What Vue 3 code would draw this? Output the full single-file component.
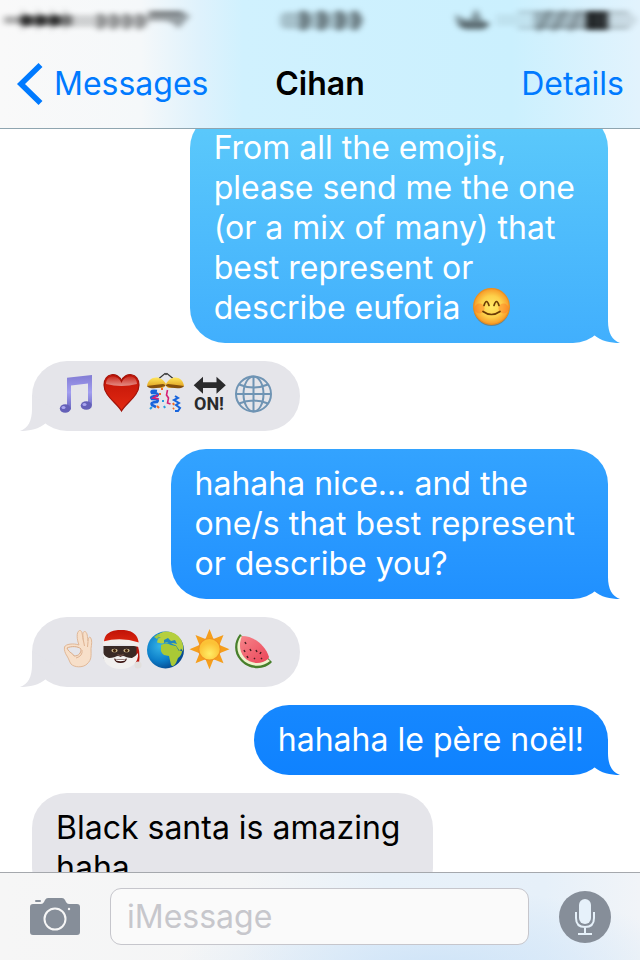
<template>
  <div class="phone">
    <header class="top">
      <svg class="status" viewBox="0 0 640 40" preserveAspectRatio="none" aria-hidden="true">
        <defs>
          <filter id="smear" x="-20%" y="-80%" width="140%" height="260%">
            <feGaussianBlur stdDeviation="3 2.6" />
          </filter>
        </defs>
        <g filter="url(#smear)">
          <rect x="4" y="16" width="18" height="8" opacity="0.3" />
          <rect x="20" y="15" width="52" height="11" opacity="0.45" />
          <circle v-for="x in [27, 41, 55]" :key="x" :cx="x" cy="20.500" r="6" opacity="0.6" />
          <path d="M22 8l8 12-8 12zM37 8l8 12-8 12zM51 8l8 12-8 12zM64 8l8 12-8 12z" opacity="0.22" />
          <rect x="70" y="15" width="78" height="12" opacity="0.16" />
          <path d="M97 13h6l5 8-5 9h-6zM110 13h6l5 8-5 9h-6zM123 13h6l5 8-5 9h-6zM136 13h6l5 8-5 9h-6z" opacity="0.3" />
          <path d="M148 11h34l8 5-12 13-4-5-8-3h-18z" opacity="0.35" />
          <path d="M150 13h32" stroke="#000" stroke-width="3" opacity="0.35" />
          <rect x="280" y="12" width="82" height="17" rx="6" opacity="0.2" />
          <path d="M300 10h6l5 10-5 11h-6zM318 10h6l5 10-5 11h-6zM336 10h6l5 10-5 11h-6zM352 10h5l6 10-6 11h-5z" opacity="0.35" />
          <path d="M456 13q2 5 14 7l6-12 6 12 8 3-6 7h-18q-12-3-10-17z" opacity="0.4" />
          <path d="M460 25h28" stroke="#000" stroke-width="4" opacity="0.35" />
          <rect x="496" y="14" width="40" height="12" opacity="0.06" />
          <rect x="534" y="12" width="60" height="17" opacity="0.25" />
          <path d="M518 12h110M518 28h110" stroke="#000" stroke-width="2" opacity="0.25" />
          <path d="M538 32l12-22M553 32l12-22M570 32l10-22" stroke="#000" stroke-width="3" opacity="0.3" />
          <rect x="586" y="11" width="22" height="19" opacity="0.8" />
          <path d="M606 12h24l8 8-8 9h-24z" opacity="0.1" />
        </g>
      </svg>
      <nav class="nav">
        <a class="back" href="#">
          <svg width="28" height="44" viewBox="0 0 28 44" aria-hidden="true">
            <path d="M24.500 3L5 22l19.500 19" fill="none" stroke="#007aff" stroke-width="5.600" />
          </svg>
          <span>Messages</span>
        </a>
        <h1 class="title">Cihan</h1>
        <a class="details" href="#">Details</a>
      </nav>
    </header>

    <main class="chat">
      <ul class="thread">
        <li v-for="message in messages" :key="message.id" class="row" :class="message.from">
          <div class="bubble" :class="{ tail: message.tail }">
            <span v-if="message.text">{{ message.text }}</span>
            <svg v-for="name in message.emoji" :key="name" class="emoji" viewBox="0 0 44 40" role="img" :aria-label="name">
              <g v-if="name === 'smile'">
                <circle cx="21.500" cy="20" r="18" fill="#8a5a20" opacity="0.5" />
                <circle cx="21.500" cy="18.500" r="17.800" fill="url(#face)" stroke="#ee8f1c" stroke-width="1.200" />
                <circle cx="9.500" cy="20.500" r="5" fill="#ff7020" opacity="0.4" />
                <circle cx="33.500" cy="20.500" r="5" fill="#ff7020" opacity="0.4" />
                <path d="M14 17.500q2.500-8 5 0M24 17.500q2.500-8 5 0M13 23.500q8.500 6 17 0" fill="none" stroke="#6b3c05" stroke-width="1.700" stroke-linecap="round" />
              </g>
              <g v-else-if="name === 'notes'">
                <path d="M11 1.700L36-1v30h-4V7.500L15 9.500v24h-4z" fill="url(#violet)" />
                <ellipse cx="9.200" cy="32.500" rx="5.400" ry="4.300" fill="#6460b8" />
                <ellipse cx="30.300" cy="29.500" rx="5.600" ry="4.300" fill="#6460b8" />
                <ellipse cx="7.500" cy="31.500" rx="2" ry="1.500" fill="#aaa6f0" />
                <ellipse cx="28.500" cy="28.500" rx="2" ry="1.500" fill="#aaa6f0" />
              </g>
              <g v-else-if="name === 'heart'">
                <path d="M21.500 35C17 27 4 20 4 9 4-3.500 18-4.500 21.500 5 25-4.500 39-3.500 39 9c0 11-13 18-17.500 26z" fill="url(#red)" stroke="#a21208" stroke-width="1.200" />
                <path d="M6 8C6-1.500 18-2 21.500 7 25-2 37-1.500 37 8q-15.500 4-31 0z" fill="url(#shine)" />
              </g>
              <g v-else-if="name === 'confetti'">
                <path d="M15 2.500l6-5 1 1 1-1 6 5" fill="none" stroke="#333" stroke-width="1.200" />
                <path d="M3 10C4 0 17-2 22 8q-1 4-5 4-6-2-14-2z" fill="url(#gold)" />
                <path d="M40 10C39 0 27-2 22 8q0 4 4 4 7-2 14-2z" fill="url(#gold)" />
                <path d="M3 10q7-1 16-2 3 1 2 2-8 3-15 2-3-1-3-2zM40 10q-7-1-16-2-3 1-2 2 8 3 15 2 3-1 3-2z" fill="#85500d" />
                <path d="M13 15q-7-1-5 2 8 0 5 3-8 0-5 3 8 0 5 3-7 0-5 3l4 2" fill="none" stroke="#1764dc" stroke-width="2.600" />
                <path d="M31 20l3 2-4 2 5 3-3 2 4 3-2 3h-3" fill="none" stroke="#1764dc" stroke-width="2" />
                <path d="M14 19l-5 3 6 1M23.500 14l-1 5 2 3-1 5 3 1" fill="none" stroke="#d61f75" stroke-width="1.600" />
                <path d="M18 12v2M13 30l2 2M29 27l1 2M30 32l-1 1M16 17v2" stroke="#f26a20" stroke-width="2" />
                <path d="M6 33l2-2M18 25h2M20 30l1 2" stroke="#269ae0" stroke-width="2" />
              </g>
              <g v-else-if="name === 'on'" fill="#2a2a2c">
                <path d="M5.700 9.200L15 .7v5.600h13.500V.7l9.300 8.500-9.300 8.500v-5.600H15v5.600z" />
                <text class="on" x="21" y="34" text-anchor="middle">ON!</text>
              </g>
              <g v-else-if="name === 'globe'" fill="none" stroke="#6f94b4" stroke-width="2">
                <circle cx="21.500" cy="18" r="17.500" />
                <ellipse cx="21.500" cy="18" rx="10" ry="17.500" />
                <path d="M21.500.6v34.800M4 18h35M7 8.500q14.500 6 29 0M7 27.500q14.500-6 29 0" />
              </g>
              <g v-else-if="name === 'okay'">
                <path d="M23 13C21 8 20 0 23.500-1.500 27-2 26 5 27.500 9 27 4 26 0 28.500-.5c3 0 3 6 3.500 10 0-3 1-5 2.500-4 2 3 1 7 .5 11 0 7 1 11-4 15.500-4 4-13 3.500-16 0-2-3-2-5-4-8-2-3-3-6-2.500-9 1-3 9-4 14.500-2z" fill="#f7dfc9" stroke="#e0b898" stroke-width="1" />
                <path d="M11 16c4-2 11-2 14 1 0 4-2 7-7 7-1-3-5-3-7-8z" fill="#e5e5ea" stroke="#dbab86" stroke-width="1" />
                <path d="M27.500 9l1 5M32 10l-.5 5M26 18q1 6-6 8" fill="none" stroke="#dfb392" stroke-width="1" />
              </g>
              <g v-else-if="name === 'santa'">
                <path d="M35 6q6 12 4 26l-5-2z" fill="#b8160c" />
                <path d="M3.500 14h33v12q-3 9-16.500 9T3.500 26z" fill="#392a25" />
                <path d="M4 11C4 0 13-2 21-2s18 2 18 16q-17-6-35-3z" fill="url(#red)" />
                <path d="M3 9.500q18-5 36 1V15q-18-5-36-1z" fill="#f0eeec" />
                <path d="M3 21q2 4 6 5 3 0 6-1 3-2 5.500 0 2.500-2 5.500 0 3 1 6 1 4-2 6-5c1 10-7 16-17.500 16S2 31 3 21z" fill="#f1f0ef" />
                <circle cx="38" cy="33" r="3.600" fill="#e1dfdd" />
                <path d="M14 26.500q6.500 2 13 0-1 4.500-6.500 4.500T14 26.500z" fill="#3d1713" />
                <path d="M15.500 27.300q5 1.500 10 0l-.5 1.200q-4.500 1.500-9 0z" fill="#fff" />
                <ellipse cx="14.500" cy="18.500" rx="3" ry="1.800" fill="#d9c396" />
                <ellipse cx="26.500" cy="18.500" rx="3" ry="1.800" fill="#d9c396" />
                <circle cx="14.500" cy="18.500" r="1.600" fill="#3b2008" />
                <circle cx="26.500" cy="18.500" r="1.600" fill="#3b2008" />
                <path d="M17.500 22.500q3 2 6 0" fill="none" stroke="#765247" stroke-width="1.300" />
              </g>
              <g v-else-if="name === 'earth'">
                <circle cx="21.500" cy="18" r="18.500" fill="url(#sea)" />
                <path d="M12 5q4-5 10-5.400 10 0 15 8 3 6 2 12l-2-3-1 3-4-6-5-2-4-1-5 1-5-1 1-4 3-1z" fill="#b5cf3e" />
                <path d="M12 13q5-3 10 0l5 1 3 5h3q0 4-4 7l-2 5q-3 5-5 2l-2-9-5-1q-4-3-3-7z" transform="translate(5 0)" fill="#a9c936" />
                <path d="M20 8l4-2 3 3 4-1 2 4-4-1-3 1-3-2-3 1z" fill="#2187bd" />
                <path d="M10 5l4-3 2 1-3 4z" fill="#9fc542" />
              </g>
              <g v-else-if="name === 'sun'">
                <path d="M21.500-3l4 10 10-4-4 10 10 4.300-10 4 4 10-10-4-4 10-4-10-10 4 4-10-10-4 10-4.300-4-10 10 4z" fill="#f59e1c" />
                <circle cx="21.500" cy="17.300" r="10.800" fill="url(#sunny)" stroke="#f09322" stroke-width="1.200" />
              </g>
              <g v-else-if="name === 'melon'">
                <path d="M8 2C2 9 1 20 8 28c8 10 24 11 32 2l-4-4L11 5z" fill="#477f2b" />
                <path d="M9 4C4 11 4 20 10 27c7 8 20 9 28 2z" fill="#eef3ce" />
                <path d="M10 4C7 11 7 19 12 25c6 7 17 8 24 2l1-2C33 13 22 4 10 4z" fill="url(#pink)" />
                <path d="M13 10l1 2M18 17l1 2M12 18l1 2M24 18l1 2M29 20l-1 2M15 24l1 2M22 27l1-1M30 27l-1-1" stroke="#4b2024" stroke-width="1.500" />
              </g>
            </svg>
          </div>
        </li>
      </ul>
    </main>

    <form class="composer" @submit.prevent>
      <button class="icon-button" type="button" aria-label="Camera">
        <svg width="50" height="38" viewBox="0 0 50 38" aria-hidden="true">
          <rect x="5" y="2" width="6" height="2" rx="1" fill="#868e99" />
          <path d="M3 6h8q2 0 3-2l1-2q1-2 3-2h14q2 0 3 2l1 2q1 2 3 2h8q3 0 3 3v25q0 3-3 3H3q-3 0-3-3V9q0-3 3-3z" fill="#868e99" />
          <circle cx="25" cy="21" r="10.500" fill="none" stroke="#f6f6f6" stroke-width="2" />
          <circle cx="39" cy="11" r="1.200" fill="#f6f6f6" />
        </svg>
      </button>
      <input v-model="draft" class="field" type="text" placeholder="iMessage" aria-label="iMessage" />
      <button class="icon-button" type="button" aria-label="Record audio">
        <svg width="52" height="52" viewBox="0 0 52 52" aria-hidden="true">
          <circle cx="26" cy="26" r="26" fill="#868e99" />
          <rect x="20" y="8" width="12" height="25" rx="6" fill="#e6f1fa" />
          <path d="M17 21v6q0 9 9 9t9-9v-6M26 36v7M19 43h14" fill="none" stroke="#e6f1fa" stroke-width="2" />
        </svg>
      </button>
    </form>

    <svg class="paints" width="0" height="0" aria-hidden="true">
      <defs>
        <radialGradient id="face" cy="0.5">
          <stop offset="0" stop-color="#ffe866" />
          <stop offset="0.6" stop-color="#fdd04a" />
          <stop offset="1" stop-color="#f79a28" />
        </radialGradient>
        <linearGradient id="violet" x2="0" y2="1">
          <stop offset="0" stop-color="#827cd4" />
          <stop offset="0.5" stop-color="#a29ef0" />
          <stop offset="1" stop-color="#6c68c0" />
        </linearGradient>
        <linearGradient id="red" x2="0" y2="1">
          <stop offset="0" stop-color="#c01307" />
          <stop offset="1" stop-color="#e32a12" />
        </linearGradient>
        <linearGradient id="shine" x2="0" y2="1">
          <stop offset="0" stop-color="#fff" stop-opacity="0.1" />
          <stop offset="1" stop-color="#fff" stop-opacity="0.5" />
        </linearGradient>
        <linearGradient id="gold" x2="0" y2="1">
          <stop offset="0" stop-color="#ffe65c" />
          <stop offset="1" stop-color="#dd9a1b" />
        </linearGradient>
        <radialGradient id="sea" cx="0.35" cy="0.4" r="0.65">
          <stop offset="0" stop-color="#35b3e6" />
          <stop offset="0.6" stop-color="#0d7fca" />
          <stop offset="1" stop-color="#064a91" />
        </radialGradient>
        <radialGradient id="sunny" cy="0.7">
          <stop offset="0" stop-color="#ffec66" />
          <stop offset="1" stop-color="#fcc236" />
        </radialGradient>
        <linearGradient id="pink" x2="1" y2="1">
          <stop offset="0" stop-color="#f7858a" />
          <stop offset="1" stop-color="#ea4458" />
        </linearGradient>
      </defs>
    </svg>
  </div>
</template>

<script setup>
import { ref } from "vue";

const draft = ref("");

// line breaks are part of the text, the space before each one is kept
const messages = ref([
  {
    id: 1,
    from: "me",
    tail: true,
    text: "From all the emojis, \nplease send me the one \n(or a mix of many) that \nbest represent or \ndescribe euforia ",
    emoji: ["smile"],
  },
  { id: 2, from: "them", tail: true, emoji: ["notes", "heart", "confetti", "on", "globe"] },
  { id: 3, from: "me", tail: true, text: "hahaha nice... and the \none/s that best represent \nor describe you?" },
  { id: 4, from: "them", tail: true, emoji: ["okay", "santa", "earth", "sun", "melon"] },
  { id: 5, from: "me", tail: true, text: "hahaha le père noël!" },
  { id: 6, from: "them", tail: false, text: "Black santa is amazing \nhaha" },
]);
</script>

<style>
body {
  margin: 0;
}
</style>

<style scoped>
.phone {
  display: flex;
  flex-direction: column;
  height: 100vh;
  overflow: hidden;
  background: #fff;
  font-family: Inter, "Liberation Sans", sans-serif;
  font-size: 32px;
  line-height: 40px;
}

.top {
  position: relative;
  z-index: 1;
  flex: none;
  border-bottom: 1px solid #8fa5b0;
  background: linear-gradient(90deg, #f9f9f9 0%, #f5f8fa 22%, #dff2fc 31%, #d0f1fe 38%, #cbf0fe 80%, #e2f3fd 100%);
}

.status {
  display: block;
  width: 100%;
  height: 40px;
}

.nav {
  display: grid;
  grid-template-columns: 1fr auto 1fr;
  align-items: center;
  height: 88px;
  padding: 0 16px;
}

.nav a {
  color: #007aff;
  text-decoration: none;
}

.back {
  display: flex;
  align-items: center;
  gap: 10px;
}

.title {
  margin: 0;
  font-size: 32px;
  font-weight: 600;
}

.details {
  justify-self: end;
}

.chat {
  flex: 1;
  min-height: 0;
}

/* the thread is scrolled a little way under the header */
.thread {
  display: flex;
  flex-direction: column;
  gap: 18px;
  margin: -16px 0 0;
  padding: 0 32px;
  list-style: none;
}

.row {
  display: flex;
}

.me {
  justify-content: flex-end;
}

.bubble {
  position: relative;
  padding: 15px 24px;
  border-radius: 35px;
  white-space: pre;
}

.me .bubble,
.me .tail::after {
  background: linear-gradient(#62d0fb 0, #5ac8fb 130px, #41affd 343px, #33a3ff 450px, #2090ff 600px, #0f82ff 776px) fixed;
}

.me .bubble {
  color: #fff;
}

.them .bubble,
.them .tail::after {
  background: #e5e5ea;
}

.tail::after {
  content: "";
  position: absolute;
  bottom: 0;
  width: 50px;
  height: 40px;
}

.me .tail::after {
  right: -12px;
  clip-path: path("M38 4V18C38 30 42 37 50 40C40 40 31 38 24 32L16 18Z");
}

.them .tail::after {
  left: -12px;
  clip-path: path("M12 4V18C12 30 8 37 0 40C10 40 19 38 26 32L34 18Z");
}

.emoji {
  width: 44px;
  height: 40px;
  overflow: visible;
  vertical-align: top;
}

.on {
  font: 700 18px Roboto, sans-serif;
}

.composer {
  position: relative;
  z-index: 1;
  display: flex;
  flex: none;
  align-items: center;
  gap: 30px;
  height: 87px;
  padding: 0 29px 0 30px;
  border-top: 1px solid #a5a8ad;
  background:
    radial-gradient(ellipse 260px 80px at 68% 110%, #cfe4f8 0%, rgba(214, 232, 248, 0) 100%),
    linear-gradient(90deg, #f6f6f6 0%, #f4f5f6 38%, #e8f1f9 60%, #e6f0f9 85%, #f1f4f8 100%);
}

.icon-button {
  flex: none;
  padding: 0;
  border: 0;
  background: none;
}

.icon-button svg {
  display: block;
}

.field {
  flex: 1;
  box-sizing: border-box;
  min-width: 0;
  height: 57px;
  padding: 0 16px;
  border: 1px solid #c6c6cc;
  border-radius: 11px;
  background: #fafafa;
  font: inherit;
}

.field::placeholder {
  color: #c7c7cc;
  opacity: 1;
}

.paints {
  position: absolute;
}
</style>
